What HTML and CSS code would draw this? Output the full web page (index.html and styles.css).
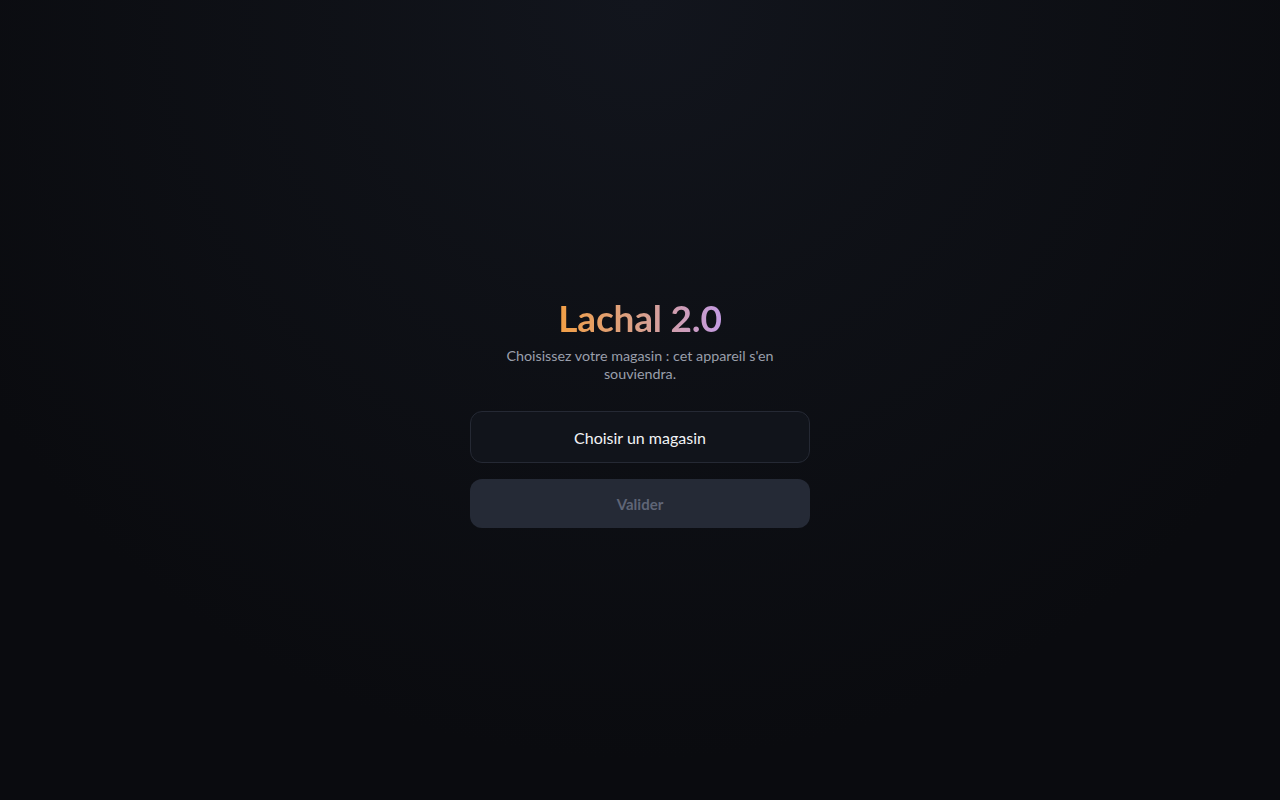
FILE: index.html
```html
<!DOCTYPE html>
<html lang="fr">
<head>
<meta charset="utf-8">
<title>Lachal 2.0</title>
<link rel="stylesheet" href="styles.css">
</head>
<body>
<main class="page">
  <section class="panel">
    <h1 class="title">Lachal 2.0</h1>
    <p class="subtitle">Choisissez votre magasin : cet appareil s'en souviendra.</p>
    <button class="select" type="button">Choisir un magasin</button>
    <button class="submit" type="button" disabled>Valider</button>
  </section>
</main>
</body>
</html>
```
FILE: styles.css
```css
* { box-sizing: border-box; }
html, body { margin: 0; height: 100%; }
body {
  font-family: "Lato", "Inter", "Noto Sans", sans-serif;
  background-color: #0a0b0f;
  background-image:
    radial-gradient(ellipse 60% 95% at 50% 0%, #12151d 0%, rgba(17,20,27,0.7) 35%, rgba(10,11,15,0) 100%);
  color: #e6e8ee;
}
.page {
  height: 800px;
  display: flex;
  align-items: flex-start;
  justify-content: center;
  padding-top: 296px;
}
.panel {
  width: 340px;
  display: flex;
  flex-direction: column;
  align-items: center;
}
.title {
  margin: 0;
  font-size: 37px;
  font-weight: 700;
  line-height: 44px;
  letter-spacing: -0.2px;
  background: linear-gradient(90deg, #f29f45 0%, #d9a08a 50%, #c39ae2 100%);
  -webkit-background-clip: text;
  background-clip: text;
  color: transparent;
}
.subtitle {
  margin: 7px 0 0;
  width: 290px;
  font-size: 14.3px;
  line-height: 18px;
  color: #9a9fab;
  text-align: center;
}
.select {
  margin-top: 28px;
  width: 340px;
  height: 52px;
  border-radius: 12px;
  border: 1px solid #252934;
  background: #11141b;
  color: #f2f3f6;
  font-family: inherit;
  font-size: 16px;
}
.submit {
  margin-top: 16px;
  width: 340px;
  height: 49px;
  border-radius: 12px;
  border: none;
  background: #252a36;
  color: #5f6577;
  font-family: inherit;
  font-size: 15px;
  font-weight: 700;
}
```
